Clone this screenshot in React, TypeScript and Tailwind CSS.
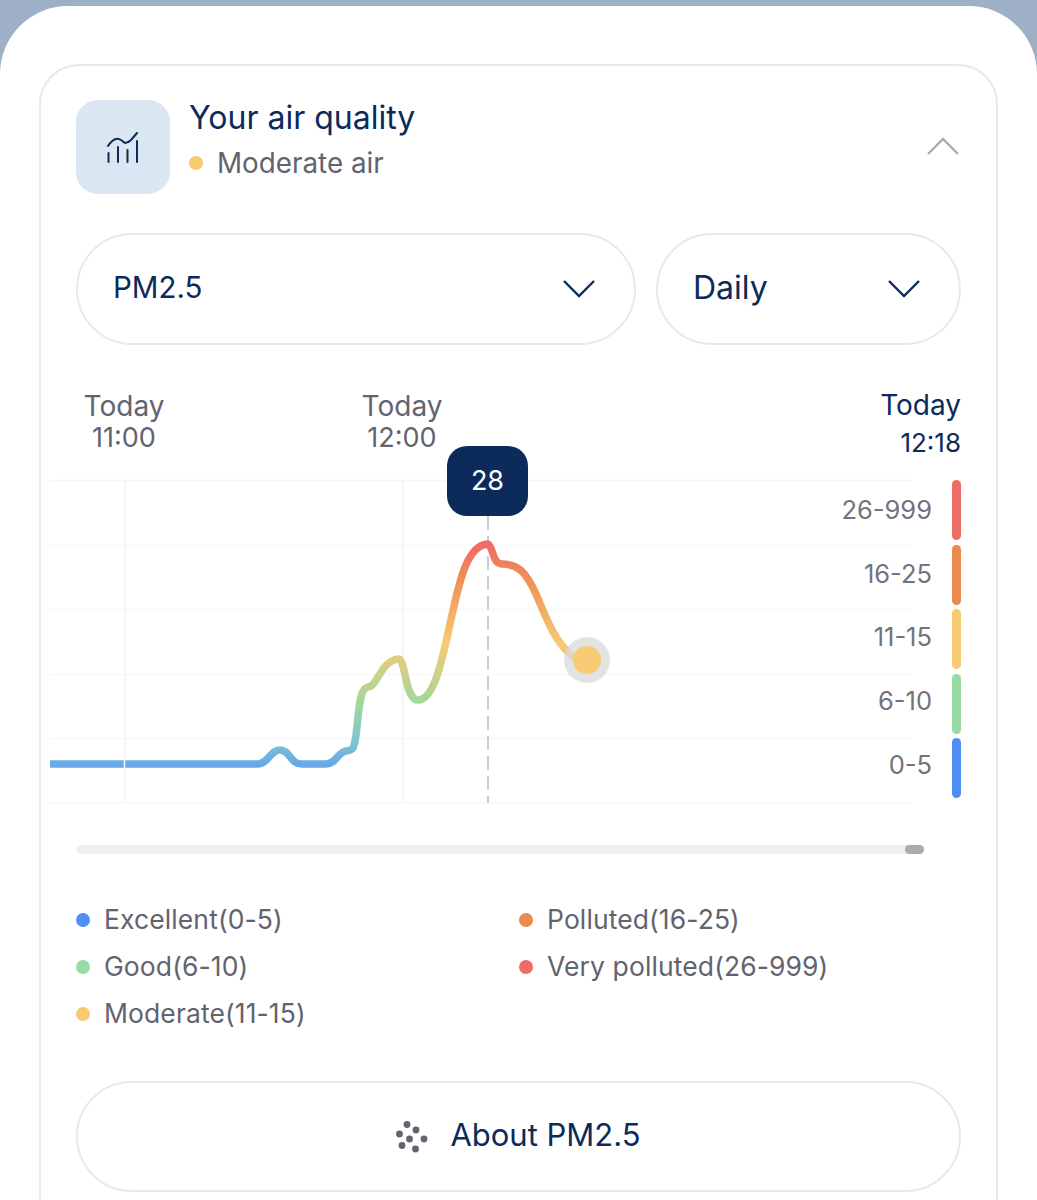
import React from 'react';

const ranges = [
  { label: '26-999', color: 'bg-[#ee6b66]' },
  { label: '16-25', color: 'bg-[#ea8a4f]' },
  { label: '11-15', color: 'bg-[#f8cb72]' },
  { label: '6-10', color: 'bg-[#98dba5]' },
  { label: '0-5', color: 'bg-[#4f8ff5]' },
];

const legendLeft = [
  { label: 'Excellent(0-5)', color: 'bg-[#4f8ff5]' },
  { label: 'Good(6-10)', color: 'bg-[#98dba5]' },
  { label: 'Moderate(11-15)', color: 'bg-[#f8cb72]' },
];

const legendRight = [
  { label: 'Polluted(16-25)', color: 'bg-[#ea8a4f]' },
  { label: 'Very polluted(26-999)', color: 'bg-[#ee6b66]' },
];

const Chevron: React.FC<{ up?: boolean; className: string }> = ({ up, className }) => (
  <svg viewBox="0 0 32 18" className={className} fill="none" stroke="currentColor" strokeWidth="2.4">
    <path d={up ? 'M1 17 L16 2 L31 17' : 'M1 1 L16 16 L31 1'} />
  </svg>
);

const ChartIcon = () => (
  <svg viewBox="0 0 32 31" className="w-8 h-[31px] text-[#0c2a5a]" fill="none" stroke="currentColor" strokeWidth="2" strokeLinecap="round">
    <path d="M1 14 Q5 8 9 7 Q11 6 14 8 L18 11 Q21 11 24 8 L30 1" />
    <path d="M1.5 21 V30 M11 15 V30 M20.5 18 V30 M30 9 V30" />
  </svg>
);

const DotsIcon = () => (
  <svg viewBox="0 0 32 32" className="w-8 h-8 fill-[#62636f]">
    <circle cx="11" cy="3.5" r="3.4" />
    <circle cx="3.5" cy="13" r="3.4" />
    <circle cx="20" cy="9" r="3.4" />
    <circle cx="28" cy="18" r="3.4" />
    <circle cx="13.5" cy="18" r="3.4" />
    <circle cx="6" cy="24.5" r="3.4" />
    <circle cx="19.5" cy="28" r="3.4" />
  </svg>
);

const LegendItem: React.FC<{ label: string; color: string }> = ({ label, color }) => (
  <div className="flex items-center h-[47px] gap-[14px]">
    <span className={`w-[14px] h-[14px] rounded-full ${color}`} />
    <span className="text-[26.5px] tracking-[0.1px] text-[#62636f]">{label}</span>
  </div>
);

const Chart = () => (
  <svg viewBox="50 470 866 340" className="w-[866px] h-[340px] block" fill="none">
    <defs>
      <linearGradient id="airLine" gradientUnits="userSpaceOnUse" x1="0" y1="545" x2="0" y2="765">
        <stop offset="0" stopColor="#ee6b66" />
        <stop offset="0.15" stopColor="#ef8f55" />
        <stop offset="0.45" stopColor="#f6cb74" />
        <stop offset="0.72" stopColor="#a0d89c" />
        <stop offset="0.9" stopColor="#7cc4d0" />
        <stop offset="1" stopColor="#67a8e6" />
      </linearGradient>
    </defs>
    <path d="M50 480.5H912M50 545.5H912M50 609.5H912M50 674.5H912M50 738.5H912M50 803H912" stroke="#f7f7f7" strokeWidth="1.5" />
    <path d="M125 480V803M403 480V803" stroke="#f5f5f5" strokeWidth="2" />
    <path d="M488 516V803" stroke="#c9ccd6" strokeWidth="2" strokeDasharray="14 6" />
    <path
      d="M50 764 H258 C268 764 270 750 280 750 C290 750 290 764 302 764 H326 C336 764 338 752 346 751 C354 750 354 748 356 735 C359 712 359 688 368 687 C378 686 381 660 399 659 C406 662 405 700 418 700 C436 700 444 650 452 615 C460 578 468 545 488 544 C494 548 492 564 502 564 C518 564 526 572 536 594 C548 622 556 646 578 660"
      stroke="url(#airLine)"
      strokeWidth="7.5"
      strokeLinecap="round"
      strokeLinejoin="round"
    />
    <path d="M124.5 760V768" stroke="#ffffff" strokeWidth="1.5" />
    <circle cx="587" cy="660" r="23" fill="#d9d9d9" fillOpacity="0.75" />
    <circle cx="587" cy="660" r="14" fill="#f8cb72" />
  </svg>
);

export default function App() {
  return (
    <div className="h-[1200px] overflow-hidden bg-[#9db0c6] pt-[6px] font-['Inter',sans-serif]">
      <div className="h-[1194px] bg-white rounded-t-[68px] px-[39px] pt-[58px]">
        <div className="h-[1200px] border-2 border-[#e9e9e9] rounded-[40px] pt-[34px] px-[35px]">
          {/* Header */}
          <div className="flex items-start">
            <div className="w-[94px] h-[94px] rounded-[22px] bg-[#dae6f2] flex items-center justify-center">
              <ChartIcon />
            </div>
            <div className="ml-[19px] flex-1">
              <div className="text-[32px] leading-[38px] -mt-[1px] text-[#0c2a5a]">Your air quality</div>
              <div className="mt-[8px] flex items-center gap-[14px]">
                <span className="w-[14px] h-[14px] rounded-full bg-[#f8cb72]" />
                <span className="text-[27.8px] leading-[36px] text-[#62636f]">Moderate air</span>
              </div>
            </div>
            <Chevron up className="w-8 h-[18px] mt-[37px] mr-[2px] text-[#a9abb1]" />
          </div>

          {/* Dropdowns */}
          <div className="mt-[39px] flex gap-[20px]">
            <div className="w-[560px] h-[112px] border-2 border-[#e9e9e9] rounded-[56px] flex items-center justify-between pl-[35px] pr-[39px]">
              <span className="text-[29.5px] -mt-[3px] text-[#0c2a5a]">PM2.5</span>
              <Chevron className="w-8 h-[18px] text-[#0c2a5a]" />
            </div>
            <div className="w-[305px] h-[112px] border-2 border-[#e9e9e9] rounded-[56px] flex items-center justify-between pl-[35px] pr-[39px]">
              <span className="text-[32px] -mt-[3px] text-[#0c2a5a]">Daily</span>
              <Chevron className="w-8 h-[18px] text-[#0c2a5a]" />
            </div>
          </div>

          {/* Time axis */}
          <div className="mt-[45px] flex items-start h-[80px] text-[27px] leading-[32px] text-[#62636f]">
            <div className="ml-[8px] w-[80px] flex flex-col items-center whitespace-nowrap">
              <span className="text-[28px]">Today</span>
              <span>11:00</span>
            </div>
            <div className="ml-[198px] w-[80px] flex flex-col items-center whitespace-nowrap">
              <span className="text-[28px]">Today</span>
              <span>12:00</span>
            </div>
            <div className="ml-auto flex flex-col items-end text-[#0c2a5a] leading-[37px] -mt-[3px]">
              <span className="text-[28px]">Today</span>
              <span className="text-[26px]">12:18</span>
            </div>
          </div>

          {/* Chart with range scale */}
          <div className="relative -ml-[26px] h-[340px]">
            <Chart />
            <div className="absolute left-[397px] -top-[24px] w-[81px] h-[70px] rounded-[20px] bg-[#0c2a5a] flex items-center justify-center text-[27px] text-white">
              28
            </div>
            <div className="absolute right-[29px] top-[8px] w-[120px] flex flex-col">
              {ranges.map((r) => (
                <div key={r.label} className="h-[63.75px] flex items-center justify-end text-[25.5px] text-[#72737e]">{r.label}</div>
              ))}
            </div>
            <div className="absolute right-0 top-[10px] w-[9px] flex flex-col gap-[4.5px]">
              {ranges.map((r) => (
                <div key={r.label} className={`h-[60px] rounded-full ${r.color}`} />
              ))}
            </div>
          </div>

          {/* Scroll track */}
          <div className="mt-[35px] w-[848px] h-[9px] rounded-full bg-[#efefef] flex justify-end">
            <div className="w-[19px] h-[9px] rounded-full bg-[#ababae]" />
          </div>

          {/* Legend */}
          <div className="mt-[42px] grid grid-cols-[443px_1fr]">
            <div>
              {legendLeft.map((l) => <LegendItem key={l.label} {...l} />)}
            </div>
            <div>
              {legendRight.map((l) => <LegendItem key={l.label} {...l} />)}
            </div>
          </div>

          {/* About button */}
          <div className="mt-[44px] w-[885px] h-[111px] border-[2.5px] border-[#e9e9e9] rounded-[56px] flex items-center justify-center gap-[22px]">
            <DotsIcon />
            <span className="text-[31px] -mt-[3px] text-[#0c2a5a]">About PM2.5</span>
          </div>
        </div>
      </div>
    </div>
  );
}
